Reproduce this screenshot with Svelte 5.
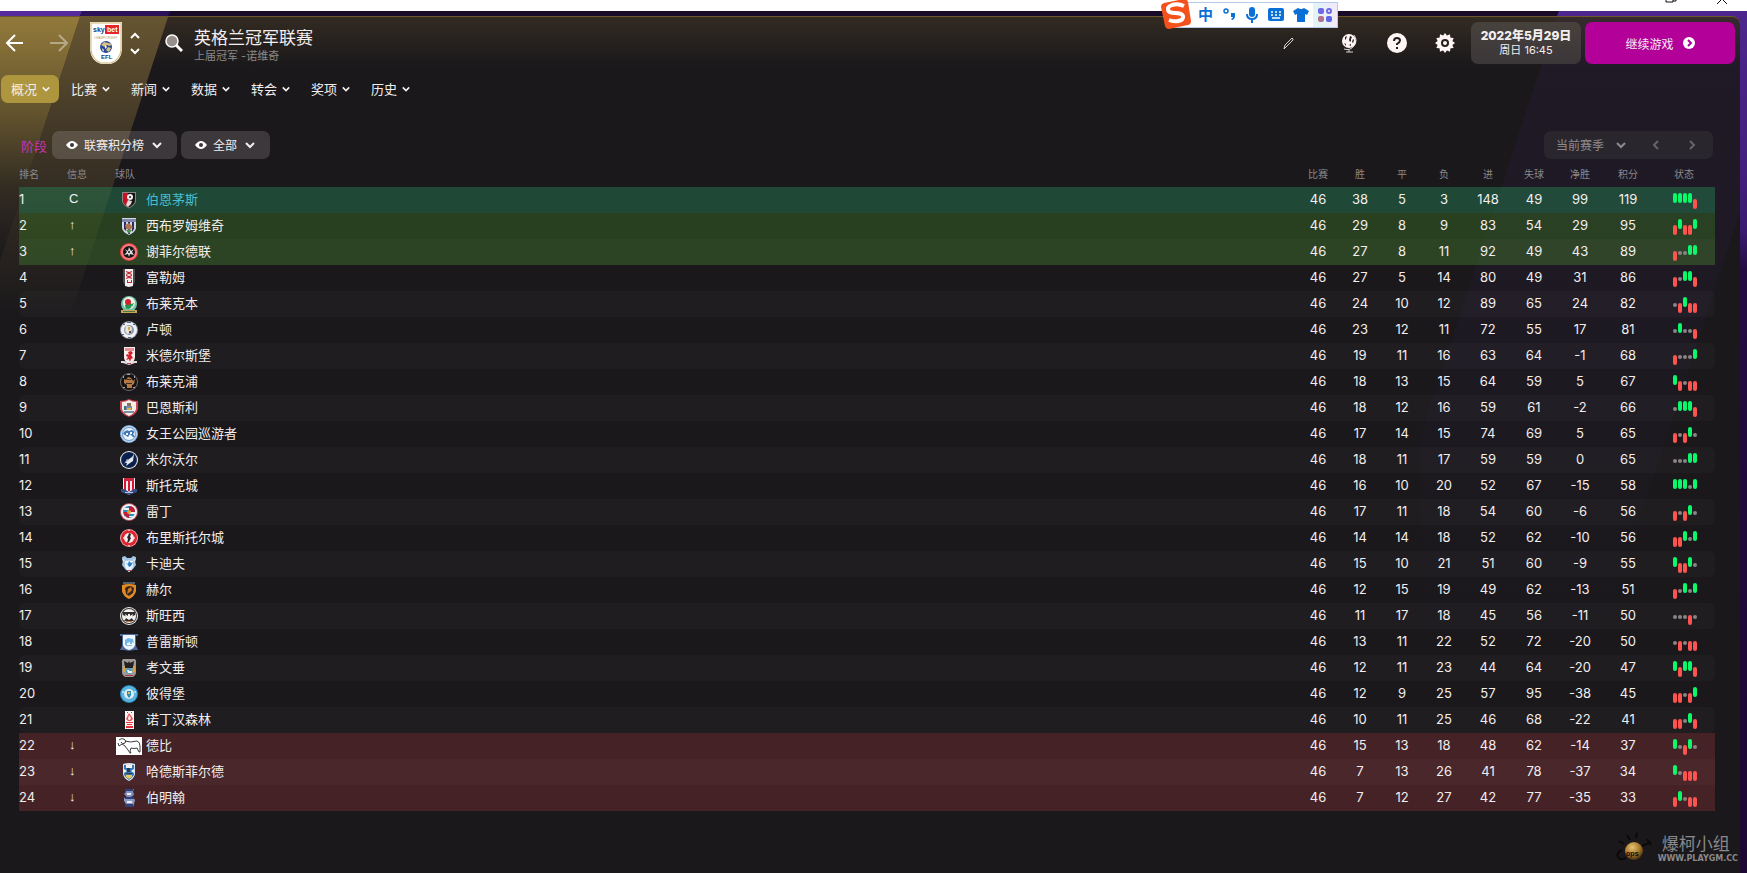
<script>
  const navItems = ['概况', '比赛', '新闻', '数据', '转会', '奖项', '历史'];
  const columns = ['比赛', '胜', '平', '负', '进', '失球', '净胜', '积分'];

  const circle = (x, y, r) => `M${x - r} ${y}a${r} ${r} 0 1 0 ${r * 2} 0a${r} ${r} 0 1 0 ${-r * 2} 0z`;
  const shield = 'M2 1h14v8c0 4-3 6-7 8.500c-4-2.500-7-4.500-7-8.500z';

  // Club crests as [path, fill] layers on an 18 x 18 grid
  const crests = {
    bournemouth: [[shield, '#8d8589'], ['M3 2h12v7c0 3-2 5-6 7.500c-4-2.500-6-4.500-6-7.500z', '#141214'], ['M3 2h5v14c-3-2-5-4-5-7z', '#c41424'], [circle(10, 6, 3), '#eee'], [circle(10, 6, 1), '#222'], ['M6 14l2-5 4 1-1 3-3 3z', '#e7dada']],
    westbrom: [['M2 1h14v9c0 4-3 6-7 8c-4-2-7-4-7-8z', '#d6d8e6'], ['M2 2h14v3h-14z', '#8287ad'], ['M4 5h2v9l-2-2zM8 5h2v12h-2zM12 5h2v7l-2 3z', '#272d62'], ['M5 8l4-2 4 4-3 3-4-1z', '#b07552'], ['M6 13h6l-3 4z', '#4d8d4b']],
    sheffield: [[circle(9, 9, 9), '#ee3542'], [circle(9, 9, 8), '#f77a7a'], [circle(9, 9, 6), '#171417'], ['M5 6l3 2 1-4 2 4 3-2-2 3 2 3-4-1-1 3-1-3-4 1 3-3z', '#ddd'], [circle(9, 9, 1), '#171417']],
    fulham: [['M3 0h12v12c0 3-3 5-6 6c-3-1-6-3-6-6z', '#4b4b50'], ['M5 0h8v17l-4 1-4-1z', '#f4eeee'], ['M9 3l3-1v1l-2 1 2 1v1l-3-1-3 1v-1l2-1-2-1v-1zM9 7l3-1v1l-2 1 2 1v1l-3-1-3 1v-1l2-1-2-1v-1zM7 11h1v2h3v-2h1v3h-5z', '#bf2a33']],
    blackburn: [[circle(9, 9, 8), '#74c4a5'], [circle(9, 8, 6), '#eef4ee'], ['M5 10q4-5 7 0q-1 4-4 4t-3-4z', '#219651'], [circle(8, 7, 3), '#d3212f'], ['M11 9l3-1-2 4z', '#219651'], ['M1 15h16v3h-16z', '#c6a553'], ['M3 16h12v1h-12z', '#597245']],
    luton: [[circle(9, 9, 9), '#8c96aa'], [circle(9, 9, 8), '#f0f1f5'], [circle(9, 9, 5), '#8d97ab'], ['M6 5h4l2 2-1 5-4 1-2-3z', '#e7e6df'], ['M8 6h2v3h-2z', '#d5a83f'], ['M9 10h2v2h-2z', '#5b473d'], ['M3 3h2v1h-2zM7 1h4v1h-4zM13 3h2v1h-2zM2 13h2v1h-2zM8 16h3v1h-3z', '#586785']],
    boro: [['M4 0h11v10q0 5-6 7q-5-2-5-7z', '#f5efef'], ['M5 1h9v3h-9z', '#e79196'], ['M8 5l3-1 2 2-2 2 2 3-2 1-1 3-1-3-3 1 2-3-2-1 1-2 2 1z', '#d81d2b'], ['M1 14h3l5 2 5-2h3v2h-2l-6 2-6-2h-2z', '#e9dcdc'], ['M7 16h4v1h-4z', '#b94850']],
    blackpool: [[circle(9, 9, 9), '#6f6867'], [circle(9, 9, 8), '#161314'], ['M4 6l2 1 2-3 3 1 2 3 2-2-1 5-2 1v3h-5v-3l-3-2z', '#b57945'], ['M7 6h4v1h-4zM6 10h6v1h-6z', '#392a26'], ['M7 1h3v1h-3zM3 3h1v2h-1zM14 3h1v2h-1zM3 14h2v1h-2zM13 14h2v1h-2z', '#aaa3a0']],
    barnsley: [['M0 2q5 0 9-2q4 2 9 2v8q-1 5-9 8q-8-3-9-8z', '#ca4650'], ['M2 3q4 0 7-2q3 2 7 2v7q-1 4-7 7q-6-3-7-7z', '#f1eeec'], ['M6 7h6v4h-6zM4 12h10v2h-10z', '#7891a5'], ['M7 4h4v3h-4z', '#88714f'], ['M7 9h4v2h-4z', '#d3b84c'], ['M4 7h2v4h-2z', '#3f6c83']],
    qpr: [[circle(9, 9, 9), '#84acd7'], [circle(9, 9, 8), '#c1d8ee'], [circle(9, 9, 7), '#6e9fce'], [circle(9, 9, 6), '#edf4fb'], ['M4 7q3-3 5-1l3-1q4 2 1 4l2 3h-2l-3-3-2 3-3-2q-3-1-1-3z', '#4178b6'], ['M6 8h2v2h-2zM10 7h2v2h-2z', '#f5f8fc']],
    millwall: [[circle(9, 9, 9), '#f1f3f7'], [circle(9, 9, 8), '#1c2e58'], [circle(9, 9, 7), '#09204c'], ['M14 3l-2 3-3 2-4 4 2 0-1 3 4-3 3-2z', '#e5e7ed'], ['M4 13l3-5 2 1z', '#adb7c7']],
    stoke: [['M3 1h12v13l-6 4-6-4z', '#f3eff1'], ['M4 1h2v12h-2zM8 4h2v10h-2zM12 1h2v12h-2z', '#d71635'], ['M4 1h10v3h-10z', '#ce253d'], ['M1 12h3l5 3 5-3h3v3l-8 3-8-3z', '#344c86'], ['M5 15h8v1h-8z', '#b4c0d6']],
    reading: [[circle(9, 9, 9), '#b2535a'], [circle(9, 9, 8), '#f4f1f2'], [circle(9, 9, 6), '#278ac5'], ['M4 5h10v2h-10zM3 9h12v2h-12zM5 13h8v1h-8z', '#f4f1f2'], ['M9 3q6 0 6 6h-6z', '#c51b34'], ['M3 9h6v6q-5-1-6-6z', '#c51b34'], [circle(9, 9, 2), '#d7a738']],
    bristol: [[circle(9, 9, 9), '#f0a4a6'], [circle(9, 9, 8), '#df252f'], [circle(9, 9, 5), '#f6eeee'], ['M9 4l2 1-1 3 1 1-2 4-2 1 1-4-1-2 1-1z', '#2f2425'], ['M3 8h1v2h-1zM14 8h1v2h-1zM8 1h2v1h-2zM8 16h2v1h-2z', '#f7a5a6']],
    cardiff: [['M2 2l3-1 2 2h4l2-2 3 1-1 4 1 4-3 4-4 3-4-3-3-4 1-4z', '#a3c7e5'], ['M5 6q4-1 8 0v5q-1 4-4 6q-3-2-4-6z', '#eaf3fb'], ['M6 8l2 1 1-3 2 2 2-1-2 4-2 1-1-2z', '#287cc0'], ['M7 15h5v1h-5z', '#c34558'], ['M2 3l3 2-2 2zM16 3l-3 2 2 2z', '#d6e7f5']],
    hull: [['M2 4h14v6q-1 5-7 8q-6-3-7-8z', '#4a2c12'], ['M2 4q7-2 14 0v6q-1 5-7 8q-6-3-7-8z', '#e28b26'], ['M5 7q5-4 9 0l-1 5-4 3-3-2z', '#36251c'], ['M8 8l3-2 1 3-2 2-3 2z', '#c97923'], ['M3 1h12v2h-12z', '#54616b']],
    swansea: [[circle(9, 9, 9), '#f0eeeb'], [circle(9, 9, 8), '#373332'], [circle(9, 9, 7), '#f2f0ee'], ['M3 5h12v3l-4 2 3 4h-10l3-4-4-2z', '#302c2c'], ['M5 7l3 2V7h2v2l3-2-1 4-3 2-3-2z', '#f4f1ef'], ['M6 14h6v1h-6z', '#ce6d45']],
    preston: [['M0 1h18v2h-2v10l2 4h-4l-5 1-5-1h-4l2-4v-10h-2z', '#4e679a'], ['M3 2h12v10q-1 4-6 5q-5-1-6-5z', '#edf5fc'], ['M5 7l3-2 5 1 1 4-2-1v2h-2v-2l-3 1v2h-2z', '#72b6e4'], ['M6 12h6v1h-6z', '#90b9d9']],
    coventry: [['M3 0h12q2 2 1 5v9q0 2-3 4h-8q-3-2-3-4v-9q-1-3 1-5z', '#9e9995'], ['M4 2l4 2 1-2 1 2 4-2-1 7h-8z', '#241f21'], ['M3 7h2v6h-2zM13 7h2v6h-2z', '#d4a63b'], [circle(9, 12, 3), '#4c9ec6'], ['M7 11h2v1h3v2h-4z', '#eef3f5'], ['M5 16h8v1h-8z', '#ad3641']],
    peterborough: [[circle(9, 9, 9), '#248bc0'], [circle(9, 9, 8), '#59b3dc'], [circle(9, 9, 5), '#d9edf5'], ['M7 6h4v4q-1 2-2 3q-1-1-2-3z', '#2d89b6'], ['M8 7h2v2h-2z', '#d2bd60'], [circle(3, 7, 1), '#c3e6f3'], [circle(15, 7, 1), '#c3e6f3']],
    forest: [['M5 0h9v18h-9z', '#fff3f2'], ['M9 2l3 4 1 2-2 2H8L6 8l1-2z', '#e45259'], ['M9 4l2 3-1 2H9L8 8z', '#fff3f2'], ['M7 1h1v1h-1zM11 1h1v1h-1zM6 11h7v1h-7zM7 13h5v1h-5zM6 15h7v2h-7z', '#e1323d']],
    huddersfield: [['M3 1q6-2 12 0v10q-1 5-6 7q-5-2-6-7z', '#dce5ee'], ['M4 2h10v10q-2 3-5 5q-3-2-5-5z', '#3979b7'], ['M6 2h6v3h-6zM4 6l3 2-3 2zM14 6l-3 2 3 2z', '#f4f3ed'], ['M7 5h3v4h-3zM6 10h6v1h-6z', '#263c4e'], ['M6 12h6v2l-3 2-3-2z', '#e6c958']],
    birmingham: [['M5 0h9l-1 2 1 4-3 2h-4l-3-3 2-2z', '#7f90bc'], ['M4 9l3-1h6l2 3-1 4-1 3h-8l1-3-2-3z', '#8c9ac2'], ['M5 0h8v2h-8zM5 8h9v2h-9zM5 15h8v3h-8z', '#303e7c'], ['M7 4h4v2h-4zM7 12h5v2h-5z', '#ebeef7']]
  };

  const teams = [
    { name: '伯恩茅斯', crest: 'bournemouth', info: 'C', status: 'champion', stats: [46, 38, 5, 3, 148, 49, 99, 119], form: 'WWWWL' },
    { name: '西布罗姆维奇', crest: 'westbrom', info: '↑', status: 'promoted', stats: [46, 29, 8, 9, 83, 54, 29, 95], form: 'LWLLW' },
    { name: '谢菲尔德联', crest: 'sheffield', info: '↑', status: 'promoted', stats: [46, 27, 8, 11, 92, 49, 43, 89], form: 'LDDWW' },
    { name: '富勒姆', crest: 'fulham', stats: [46, 27, 5, 14, 80, 49, 31, 86], form: 'LDWWL' },
    { name: '布莱克本', crest: 'blackburn', stats: [46, 24, 10, 12, 89, 65, 24, 82], form: 'DLWLL' },
    { name: '卢顿', crest: 'luton', stats: [46, 23, 12, 11, 72, 55, 17, 81], form: 'DWDDL' },
    { name: '米德尔斯堡', crest: 'boro', stats: [46, 19, 11, 16, 63, 64, -1, 68], form: 'LDDDW' },
    { name: '布莱克浦', crest: 'blackpool', stats: [46, 18, 13, 15, 64, 59, 5, 67], form: 'WLDLL' },
    { name: '巴恩斯利', crest: 'barnsley', stats: [46, 18, 12, 16, 59, 61, -2, 66], form: 'DWWWL' },
    { name: '女王公园巡游者', crest: 'qpr', stats: [46, 17, 14, 15, 74, 69, 5, 65], form: 'LDLWD' },
    { name: '米尔沃尔', crest: 'millwall', stats: [46, 18, 11, 17, 59, 59, 0, 65], form: 'DDDWW' },
    { name: '斯托克城', crest: 'stoke', stats: [46, 16, 10, 20, 52, 67, -15, 58], form: 'WWWDW' },
    { name: '雷丁', crest: 'reading', stats: [46, 17, 11, 18, 54, 60, -6, 56], form: 'LDLWD' },
    { name: '布里斯托尔城', crest: 'bristol', stats: [46, 14, 14, 18, 52, 62, -10, 56], form: 'LLWDW' },
    { name: '卡迪夫', crest: 'cardiff', stats: [46, 15, 10, 21, 51, 60, -9, 55], form: 'WLLWD' },
    { name: '赫尔', crest: 'hull', stats: [46, 12, 15, 19, 49, 62, -13, 51], form: 'LDWDW' },
    { name: '斯旺西', crest: 'swansea', stats: [46, 11, 17, 18, 45, 56, -11, 50], form: 'DDDLD' },
    { name: '普雷斯顿', crest: 'preston', stats: [46, 13, 11, 22, 52, 72, -20, 50], form: 'DLDLL' },
    { name: '考文垂', crest: 'coventry', stats: [46, 12, 11, 23, 44, 64, -20, 47], form: 'WLWWL' },
    { name: '彼得堡', crest: 'peterborough', stats: [46, 12, 9, 25, 57, 95, -38, 45], form: 'LLDLW' },
    { name: '诺丁汉森林', crest: 'forest', stats: [46, 10, 11, 25, 46, 68, -22, 41], form: 'LLDWL' },
    { name: '德比', crest: 'derby', info: '↓', status: 'relegated', stats: [46, 15, 13, 18, 48, 62, -14, 37], form: 'WDLWD' },
    { name: '哈德斯菲尔德', crest: 'huddersfield', info: '↓', status: 'relegated', stats: [46, 7, 13, 26, 41, 78, -37, 34], form: 'WDLLL' },
    { name: '伯明翰', crest: 'birmingham', info: '↓', status: 'relegated', stats: [46, 7, 12, 27, 42, 77, -35, 33], form: 'LWDLL' }
  ];

  const toothAngles = Array.from({ length: 12 }, (_, i) => i * 30);

  let activeNav = $state('概况');
</script>

{#snippet chevron(size)}
  <svg class="chevron" width={size} height={size} viewBox="0 0 10 10" aria-hidden="true">
    <path d="M1 3l4 4 4-4" />
  </svg>
{/snippet}

{#snippet eye()}
  <svg width="12" height="8" viewBox="0 0 12 8" aria-hidden="true">
    <path d="M0 4q3-4 6-4t6 4q-3 4-6 4t-6-4z" fill="#fff" />
    <circle cx="6" cy="4" r="2" fill="#3a3638" />
  </svg>
{/snippet}

<div class="screen">
  <div class="titlebar">
    <svg width="12" height="4" viewBox="0 0 12 4" aria-hidden="true"><path d="M1 0v2h7v-2M8 1h3v-1" fill="none" stroke="#111" /></svg>
    <svg width="12" height="4" viewBox="0 0 12 4" aria-hidden="true"><path d="M1 4l5-5 5 5" fill="none" stroke="#111" /></svg>
  </div>

  <svg class="strip left-strip" width="200" height="5" aria-hidden="true">
    <path d="M0 0h82l-2 5h-80z" fill="#562a9b" />
    <path d="M82 0h88l-2 5h-88z" fill="#2b1259" />
  </svg>
  <div class="strip right-strip"></div>

  <div class="panel">
    <svg class="beams" width="200" height="420" viewBox="0 0 200 420" aria-hidden="true">
      <defs>
        <linearGradient id="beam-bright" x1="0" y1="0" x2="0" y2="1">
          <stop offset="0" stop-color="#91793a" />
          <stop offset="0.4" stop-color="#91793a" stop-opacity="0.6" />
          <stop offset="0.7" stop-color="#91793a" stop-opacity="0.2" />
          <stop offset="1" stop-color="#91793a" stop-opacity="0" />
        </linearGradient>
        <linearGradient id="beam-soft" x1="0" y1="0" x2="0" y2="1">
          <stop offset="0" stop-color="#655431" />
          <stop offset="0.4" stop-color="#655431" stop-opacity="0.5" />
          <stop offset="1" stop-color="#655431" stop-opacity="0" />
        </linearGradient>
      </defs>
      <path d="M0 0h80l-80 244z" fill="url(#beam-bright)" />
      <path d="M80 0h88l-98 300h-70v-56z" fill="url(#beam-soft)" />
    </svg>
    <svg class="haze" width="320" height="640" viewBox="0 0 320 640" aria-hidden="true">
      <defs>
        <linearGradient id="haze" x1="0" y1="0" x2="0" y2="1">
          <stop offset="0" stop-color="#5a2a9c" stop-opacity="0.1" />
          <stop offset="1" stop-color="#5a2a9c" stop-opacity="0" />
        </linearGradient>
      </defs>
      <path d="M137 0h183v195l-145 445h-175v-220z" fill="url(#haze)" />
    </svg>

    <header>
      <button class="icon back" aria-label="后退">
        <svg width="18" height="18" viewBox="0 0 18 18"><path d="M10 1L2 9l8 8M2 9h16" /></svg>
      </button>
      <button class="icon forward" aria-label="前进" disabled>
        <svg width="18" height="18" viewBox="0 0 18 18"><path d="M9 1l8 8-8 8M17 9h-17" /></svg>
      </button>
      <svg class="league" width="32" height="42" viewBox="0 0 32 42">
        <path d="M0 0h32v28q-1 11-11 14h-10q-10-3-11-14z" fill="#f4efe4" />
        <path d="M1 1h30v27q-1 9-10 13h-10q-9-4-10-13z" fill="#fff" stroke="#ccb877" />
        <text x="3" y="10" font-size="7" font-weight="700" fill="#213d86">sky</text>
        <path d="M15 3h14v9h-14z" fill="#e4232d" />
        <text x="17" y="10" font-size="7" font-weight="700" fill="#fff">bet</text>
        <text x="4" y="17" font-size="3" fill="#b7a06b">CHAMPIONSHIP</text>
        <circle cx="16" cy="25" r="6" fill="#2c498f" />
        <path d="M11 23l3-3 4 1 4 1-2 2-3-1-2 2zM16 28l2-3 3 1-2 4z" fill="#d7c286" />
        <path d="M12 26l2 2-1 2zM15 23l2 2-2 2z" fill="#fff" />
        <text x="11" y="37" font-size="6" font-weight="700" fill="#203878">EFL</text>
      </svg>
      <div class="stepper">
        <button class="icon up" aria-label="上一个">{@render chevron(10)}</button>
        <button class="icon" aria-label="下一个">{@render chevron(10)}</button>
      </div>
      <button class="icon search" aria-label="搜索">
        <svg width="18" height="18" viewBox="0 0 18 18">
          <circle cx="7" cy="7" r="6" fill="#978f8c" stroke="#fff" stroke-width="1.500" />
          <path d="M11 11l6 6" stroke-width="3" />
        </svg>
      </button>
      <div class="heading">
        <h1>英格兰冠军联赛</h1>
        <p>上届冠军 -诺维奇</p>
      </div>

      <div class="tools">
        <button class="icon pencil" aria-label="编辑">
          <svg width="20" height="20" viewBox="0 0 20 20">
            <path class="thin" d="M5 16l1-4 7-7 1 1v1l-7 7z" />
          </svg>
        </button>
        <button class="icon" aria-label="世界">
          <svg width="20" height="20" viewBox="0 0 20 20">
            <path class="thin" d="M15 2a9 9 0 0 1-10 14M10 16v3M7 19h7" />
            <circle class="solid" cx="10" cy="8" r="7" />
            <path class="ink" d="M6 4l2-1-1 3-1 1zM11 3l2 1-1 2v2l-1 1-1-2zM14 6l1 1-1 3-1-1zM5 10l2 1v2zM10 12l2-1v2z" />
          </svg>
        </button>
        <button class="icon" aria-label="帮助">
          <svg width="20" height="20" viewBox="0 0 20 20">
            <circle class="solid" cx="10" cy="10" r="10" />
            <path class="mark" d="M7 8q0-3 3-3t3 2.500q0 1.500-3 3.500v1M10 14v2" />
          </svg>
        </button>
        <button class="icon" aria-label="设置">
          <svg width="20" height="20" viewBox="0 0 20 20">
            {#each toothAngles as angle}
              <path class="solid" d="M7 4l3-4 3 4z" transform="rotate({angle} 10 10)" />
            {/each}
            <circle class="solid" cx="10" cy="10" r="7" />
            <circle class="ink" cx="10" cy="10" r="4" />
            <circle class="solid" cx="10" cy="10" r="2" />
          </svg>
        </button>
      </div>
      <button class="date">
        <strong>2022年5月29日</strong>
        <span>周日 16:45</span>
      </button>
      <button class="continue">
        继续游戏
        <svg width="12" height="12" viewBox="0 0 12 12" aria-hidden="true">
          <circle cx="6" cy="6" r="6" fill="#fff" />
          <path d="M5 3l3 3-3 3" fill="none" stroke="#b0009a" stroke-width="2" />
        </svg>
      </button>
    </header>

    <nav>
      {#each navItems as item}
        <button class:active={item === activeNav} onclick={() => (activeNav = item)}>
          {item}{@render chevron(8)}
        </button>
      {/each}
    </nav>

    <div class="filters">
      <span class="stage">阶段</span>
      <button class="filter">{@render eye()}<span>联赛积分榜</span>{@render chevron(10)}</button>
      <button class="filter">{@render eye()}<span>全部</span>{@render chevron(10)}</button>
      <div class="season">
        <button class="current"><span>当前赛季</span>{@render chevron(10)}</button>
        <button class="prev" aria-label="上赛季">{@render chevron(10)}</button>
        <button class="next" aria-label="下赛季">{@render chevron(10)}</button>
      </div>
    </div>

    <table>
      <colgroup>
        <col class="c-rank" />
        <col class="c-rank" />
        <col />
        <col class="c-small" />
        <col class="c-small" />
        <col class="c-small" />
        <col class="c-small" />
        <col class="c-medium" />
        <col class="c-medium" />
        <col class="c-medium" />
        <col class="c-points" />
        <col class="c-form" />
      </colgroup>
      <thead>
        <tr>
          <th class="left">排名</th>
          <th class="left">信息</th>
          <th class="left">球队</th>
          {#each columns as column}
            <th>{column}</th>
          {/each}
          <th>状态</th>
        </tr>
      </thead>
      <tbody>
        {#each teams as team, i}
          <tr class={team.status ?? 'plain'}>
            <td class="left">{i + 1}</td>
            <td class="left info">{team.info ?? ''}</td>
            <td class="left">
              <div class="team">
                <span class="crest">
                  {#if team.crest === 'derby'}
                    <svg width="26" height="18" viewBox="0 0 26 18" aria-hidden="true">
                      <path d="M0 0h26v18h-26z" fill="#fff" />
                      <path d="M3 3q2-2 5-1 3 2 1 4-3 2-4-1M2 6l1 3 3-2M9 4q5 2 12 0 3 1 3 5v6h-1l-2-4q-3 1-6 0l-1 3 1 2h-1l-2-3-3-4-3-2" fill="none" stroke="#3d3d3f" />
                    </svg>
                  {:else}
                    <svg width="18" height="18" viewBox="0 0 18 18" aria-hidden="true">
                      {#each crests[team.crest] as [d, fill]}
                        <path {d} {fill} />
                      {/each}
                    </svg>
                  {/if}
                </span>
                {team.name}
              </div>
            </td>
            {#each team.stats as value}
              <td>{value}</td>
            {/each}
            <td class="form-cell">
              <div class="form">
                {#each team.form as result}
                  <i class={result}></i>
                {/each}
              </div>
            </td>
          </tr>
        {/each}
      </tbody>
    </table>

    <footer>
      <svg width="38" height="32" viewBox="0 0 38 32" aria-hidden="true">
        <defs>
          <radialGradient id="bomb" cx="0.4" cy="0.3" r="0.7">
            <stop offset="0" stop-color="#e6c475" />
            <stop offset="0.6" stop-color="#a8772a" />
            <stop offset="1" stop-color="#49300f" />
          </radialGradient>
        </defs>
        <path d="M14 7l-3-5M20 5l1-5M8 11l-5-3M6 17q-6 3-4 7t8 1M26 13l9-4M31 6l4 6" fill="none" stroke="#0b090b" stroke-width="2" />
        <circle cx="18" cy="18" r="9" fill="url(#bomb)" />
        <text x="10" y="23" font-size="7" font-weight="700" fill="#111">ops</text>
      </svg>
      <div class="brand">
        <span>爆柯小组</span>
        <small>WWW.PLAYGM.CC</small>
      </div>
    </footer>
  </div>

  <!-- input method bar floating above the window -->
  <div class="ime">
    <svg class="ime-logo" width="32" height="30" viewBox="0 0 32 30" aria-hidden="true">
      <path d="M4 3l20-4q3 0 4 3l3 19q0 3-3 4l-19 4q-3 0-4-3l-4-19q0-3 3-4z" fill="#f4511c" />
      <path d="M24 6q-6-3-12-1-5 2-4 5 1 3 7 3 7 0 8 3 1 4-5 5-4 1-9-1" fill="none" stroke="#fff" stroke-width="4" />
    </svg>
    <span class="ime-text">中</span>
    <svg width="14" height="14" viewBox="0 0 14 14" aria-hidden="true">
      <circle cx="4" cy="3" r="2" fill="none" stroke="#0a6fd6" stroke-width="1.500" />
      <path d="M9 5h4v3q0 3-3 4l-1-1q2-1 2-2h-2z" fill="#0a6fd6" />
    </svg>
    <svg width="14" height="16" viewBox="0 0 14 16" aria-hidden="true">
      <rect x="4" y="0" width="6" height="10" rx="3" fill="#0a6fd6" />
      <path d="M2 7q0 5 5 5t5-5M7 12v4" fill="none" stroke="#0a6fd6" stroke-width="2" />
    </svg>
    <svg width="16" height="14" viewBox="0 0 16 14" aria-hidden="true">
      <rect width="16" height="13" rx="2" fill="#0a6fd6" />
      <path d="M3 4h2M7 4h2M11 4h2M3 7h2M7 7h2M11 7h2M4 10h8" stroke="#fff" stroke-width="1.500" />
    </svg>
    <svg width="16" height="14" viewBox="0 0 16 14" aria-hidden="true">
      <path d="M5 0q3 2 6 0l5 3-2 4-2-1v8h-8v-8l-2 1-2-4z" fill="#0a6fd6" />
    </svg>
    <span class="ime-apps">
      <svg width="14" height="14" viewBox="0 0 14 14" aria-hidden="true">
        <rect width="6" height="6" rx="2" fill="#6f68e8" />
        <rect x="9" y="1" width="4" height="4" rx="2" fill="none" stroke="#6f68e8" stroke-width="2" />
        <rect y="8" width="6" height="6" rx="2" fill="#b0748f" />
        <rect x="8" y="8" width="6" height="6" rx="2" fill="#5f65ea" />
      </svg>
    </span>
  </div>
</div>

<style>
  :global(body) {
    margin: 0;
    background: #1a0c2a;
  }

  .screen {
    position: relative;
    display: flex;
    flex-direction: column;
    min-height: 100vh;
    overflow: hidden;
    background: #190b28;
    color: #f3eeee;
    font-family: Inter, 'Noto Sans CJK SC', sans-serif;
    font-size: 13px;
  }

  .titlebar {
    display: flex;
    justify-content: flex-end;
    gap: 39px;
    height: 11px;
    padding-right: 19px;
    background: #fff;
  }

  .strip {
    position: absolute;
    top: 11px;
  }

  .left-strip {
    left: 0;
  }

  .right-strip {
    right: 0;
    bottom: 0;
    width: 190px;
    background: linear-gradient(#4d268d, #43207d 160px, #3a1a70 220px, #230c40 260px, #1d0833);
    clip-path: polygon(2px 0, 100% 0, 100% 100%, 180px 100%, 180px 40px, 0 5px);
  }

  .panel {
    position: relative;
    display: flex;
    flex-direction: column;
    flex: 1;
    margin: 5px 7px 0 0;
    border-top: 1px solid #6b5729;
    border-top-right-radius: 8px;
    overflow: hidden;
    background: linear-gradient(#332b22, #1a181b 50px);
  }

  .beams,
  .haze {
    position: absolute;
    top: 0;
    left: 0;
  }

  .haze {
    right: 0;
    left: auto;
  }

  header,
  nav,
  .filters,
  table,
  footer {
    position: relative;
  }

  button {
    margin: 0;
    padding: 0;
    border: 0;
    background: none;
    color: inherit;
    font: inherit;
    cursor: pointer;
  }

  svg {
    display: block;
    flex: none;
  }

  .chevron {
    fill: none;
    stroke: currentColor;
    stroke-width: 2;
  }

  header {
    display: flex;
    align-items: center;
    height: 42px;
    padding: 5px 5px 0;
  }

  .icon svg {
    fill: none;
    stroke: #fff;
    stroke-width: 2;
  }

  .icon .solid {
    fill: #fff5f5;
    stroke: none;
  }

  .icon .ink {
    fill: #231f1e;
    stroke: none;
  }

  .icon .mark {
    stroke: #231f1e;
  }

  .icon .thin {
    stroke: #d8d2d2;
    stroke-width: 1;
  }

  .forward {
    margin: 0 22px 0 27px;
    opacity: 0.4;
  }

  .league {
    overflow: visible;
    font-family: 'Liberation Sans', sans-serif;
  }

  .stepper {
    display: flex;
    flex-direction: column;
    gap: 5px;
    margin: 0 25px 0 8px;
  }

  .up {
    transform: rotate(180deg);
  }

  .heading {
    align-self: flex-end;
    margin-left: 11px;
  }

  h1 {
    margin: 0;
    font-size: 17px;
    font-weight: 400;
    line-height: 20px;
  }

  p {
    margin: 0;
    color: #8d8885;
    font-size: 11px;
    line-height: 16px;
  }

  .tools {
    display: flex;
    gap: 28px;
    margin-left: auto;
  }

  .pencil {
    margin-right: 12px;
  }

  .date {
    display: flex;
    flex-direction: column;
    align-items: center;
    justify-content: center;
    width: 110px;
    height: 42px;
    margin: 0 4px 0 16px;
    border-radius: 7px;
    background: linear-gradient(#48423d, #3b3639);
    font-size: 11px;
    line-height: 14px;
  }

  .date strong {
    font-size: 12px;
    font-weight: 800;
  }

  .continue {
    display: flex;
    align-items: center;
    justify-content: center;
    gap: 9px;
    width: 150px;
    height: 42px;
    border-radius: 7px;
    background: #b20099;
    font-size: 12px;
  }

  nav {
    display: flex;
    gap: 2px;
    margin: 11px 0 28px 1px;
  }

  nav button {
    display: flex;
    align-items: center;
    gap: 5px;
    height: 28px;
    padding: 0 9px 2px 10px;
    border-radius: 7px;
  }

  nav svg {
    margin-top: 2px;
  }

  nav .active {
    background: #ae963f;
  }

  .filters {
    display: flex;
    align-items: center;
    gap: 4px;
    padding: 0 27px 0 21px;
  }

  .stage {
    margin-right: 1px;
    color: #c536b4;
  }

  .filter {
    display: flex;
    align-items: center;
    height: 28px;
    padding: 0 15px 0 14px;
    border-radius: 7px;
    background: rgba(255, 240, 245, 0.15);
    font-size: 12px;
  }

  .filter span {
    margin: 0 8px 0 6px;
    padding-bottom: 2px;
  }

  .season {
    display: flex;
    height: 28px;
    margin-left: auto;
    padding-right: 3px;
    border-radius: 7px;
    background: #2a262d;
    color: #8e8a8e;
    font-size: 12px;
  }

  .current {
    display: flex;
    align-items: center;
    gap: 12px;
    padding: 0 12px;
  }

  .current span {
    padding-bottom: 2px;
  }

  .prev,
  .next {
    padding: 0 13px;
    color: #68636b;
  }

  .prev svg {
    transform: rotate(90deg);
  }

  .next svg {
    transform: rotate(-90deg);
  }

  table {
    width: calc(100% - 44px);
    margin-left: 19px;
    border-spacing: 0;
    table-layout: fixed;
  }

  .c-rank {
    width: 48px;
  }

  .c-small {
    width: 42px;
  }

  .c-medium {
    width: 46px;
  }

  .c-points {
    width: 50px;
  }

  .c-form {
    width: 62px;
  }

  th,
  td {
    height: 24px;
    padding: 0 0 2px;
    text-align: center;
    line-height: 20px;
  }

  th {
    height: 26px;
    padding: 2px 0 0;
    color: #8c888b;
    font-size: 10px;
    font-weight: 400;
  }

  .left {
    text-align: left;
  }

  td.info {
    padding-left: 2px;
    font-family: 'Liberation Sans', sans-serif;
  }

  tr:nth-child(odd) td {
    background: rgba(255, 255, 255, 0.024);
  }

  .plain:nth-child(odd) td:first-child {
    border-radius: 6px 0 0 6px;
  }

  .plain:nth-child(odd) td:last-child {
    border-radius: 0 6px 6px 0;
  }

  .champion {
    background: rgba(28, 120, 76, 0.48);
  }

  .promoted {
    background: rgba(54, 104, 35, 0.5);
  }

  .relegated {
    background: rgba(112, 44, 49, 0.5);
  }

  .champion .team {
    color: #45bfd0;
  }

  .team {
    display: flex;
    align-items: center;
    gap: 3px;
  }

  .crest {
    display: flex;
    justify-content: center;
    width: 28px;
    padding-top: 2px;
  }

  td.form-cell {
    padding: 2px 0 0 2px;
  }

  .form {
    display: flex;
    justify-content: center;
    gap: 1px;
    height: 16px;
  }

  .form i {
    width: 4px;
    border-radius: 2px;
  }

  .W {
    height: 10px;
    background: #0cf86b;
  }

  .L {
    align-self: flex-end;
    height: 10px;
    background: #ff5350;
  }

  .D {
    align-self: center;
    height: 4px;
    background: #8b8486;
  }

  footer {
    display: flex;
    justify-content: flex-end;
    gap: 4px;
    padding: 22px 2px 8px 0;
  }

  .brand {
    display: flex;
    flex-direction: column;
    color: #8a888a;
    font-family: 'Noto Sans CJK SC', sans-serif;
    font-size: 17px;
    line-height: 20px;
  }

  .brand span {
    padding-left: 4px;
  }

  .brand small {
    font-family: 'DejaVu Sans', sans-serif;
    font-size: 8px;
    font-weight: 700;
    line-height: 12px;
  }

  .ime {
    position: absolute;
    top: 2px;
    right: 409px;
    display: flex;
    align-items: center;
    gap: 9px;
    height: 24px;
    padding-left: 26px;
    border: 1px solid #b6cbea;
    background: #fff;
  }

  .ime-logo {
    position: absolute;
    top: -3px;
    left: -12px;
  }

  .ime-text {
    color: #0a6fd6;
    font-size: 15px;
    font-weight: 700;
    line-height: 24px;
  }

  .ime-apps {
    display: flex;
    align-items: center;
    height: 24px;
    margin-left: -5px;
    padding: 0 5px;
    background: linear-gradient(90deg, #dff6f8, #f3e9fa);
  }
</style>
